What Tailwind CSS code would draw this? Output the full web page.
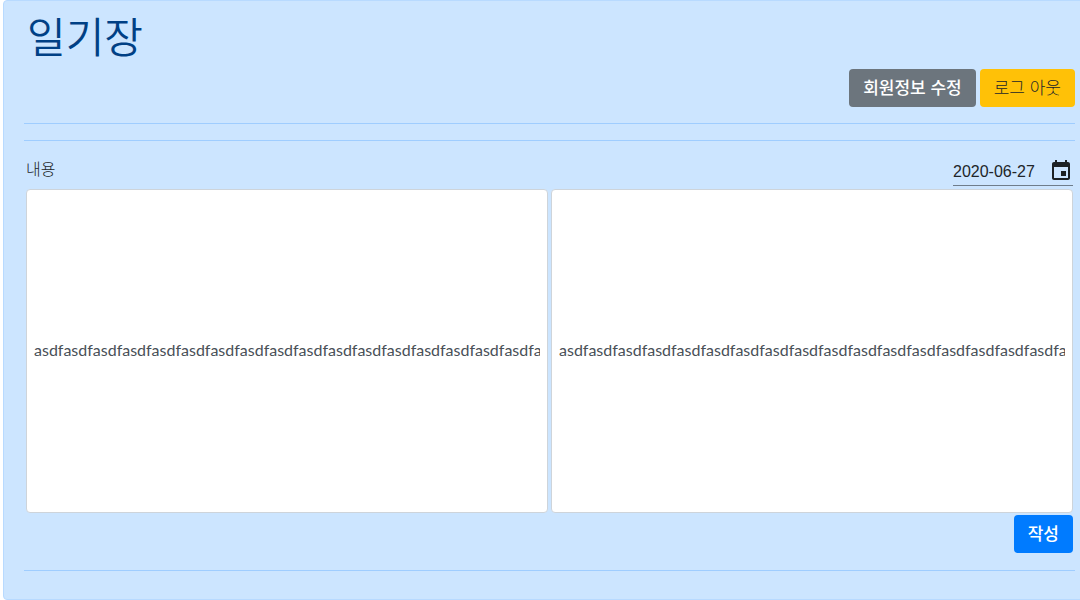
<!DOCTYPE html>
<html lang="ko">
<head>
<meta charset="utf-8">
<meta name="viewport" content="width=device-width, initial-scale=1">
<title>일기장</title>
<script src="https://cdn.jsdelivr.net/npm/@tailwindcss/browser@4"></script>
</head>
<body class="overflow-x-hidden bg-white font-['Liberation_Sans','Noto_Sans_CJK_KR',sans-serif] text-base text-[#212529]">
<main class="-mr-4 ml-[3px] rounded border border-[#b8daff] bg-[#cce5ff] px-5 pb-7">
  <h1 class="pt-2 pl-[3px] text-[42px] leading-[60px] font-[350] text-[#004085]">일기장</h1>
  <div class="flex justify-end gap-1">
    <button type="button" class="h-[38px] rounded bg-[#6c757d] px-[14px] pt-[2px] text-[17px] leading-6 font-medium text-white">회원정보 수정</button>
    <button type="button" class="h-[38px] rounded bg-[#ffc107] px-[14px] pt-[2px] text-[17px] leading-6 font-light text-[#212529]">로그 아웃</button>
  </div>
  <hr class="mt-4 border-[#9fcdff]">
  <hr class="mt-4 border-[#9fcdff]">
  <section class="px-[2px] pt-4">
    <div class="flex items-start justify-between">
      <label for="content-left" class="pt-px leading-6 font-light">내용</label>
      <div class="flex h-[29px] w-[120px] items-center justify-between border-b border-[#6f7d8b]">
        <input type="text" value="2020-06-27" aria-label="날짜" class="w-[88px] bg-transparent pt-[2px] text-base leading-5 text-[#212529] outline-none">
        <button type="button" aria-label="달력 열기" class="size-6">
          <svg viewBox="0 0 24 24" class="size-6 fill-[#1c2125]" aria-hidden="true"><path d="M17 12h-5v5h5v-5zM16 1v2H8V1H6v2H5c-1.11 0-1.99.9-1.99 2L3 19c0 1.1.89 2 2 2h14c1.1 0 2-.9 2-2V5c0-1.1-.9-2-2-2h-1V1h-2zm3 18H5V8h14v11z"/></svg>
        </button>
      </div>
    </div>
    <div class="mt-[3px] grid grid-cols-2 gap-[3px]">
      <input id="content-left" type="text" value="asdfasdfasdfasdfasdfasdfasdfasdfasdfasdfasdfasdfasdfasdfasdfasdfasdfasdfasdfasdfasdf" class="h-[324px] w-full rounded border border-[#ced4da] bg-white px-[7px] pb-1 font-['Lato',sans-serif] text-[#495057]">
      <input type="text" aria-label="내용 오른쪽" value="asdfasdfasdfasdfasdfasdfasdfasdfasdfasdfasdfasdfasdfasdfasdfasdfasdfasdfasdfasdfasdf" class="h-[324px] w-full rounded border border-[#ced4da] bg-white px-[7px] pb-1 font-['Lato',sans-serif] text-[#495057]">
    </div>
    <div class="mt-[2px] flex justify-end">
      <button type="submit" class="h-[38px] rounded bg-[#007bff] px-[14px] pt-[2px] text-[17px] leading-6 font-medium text-white">작성</button>
    </div>
  </section>
  <hr class="mt-[17px] border-[#9fcdff]">
</main>
</body>
</html>
